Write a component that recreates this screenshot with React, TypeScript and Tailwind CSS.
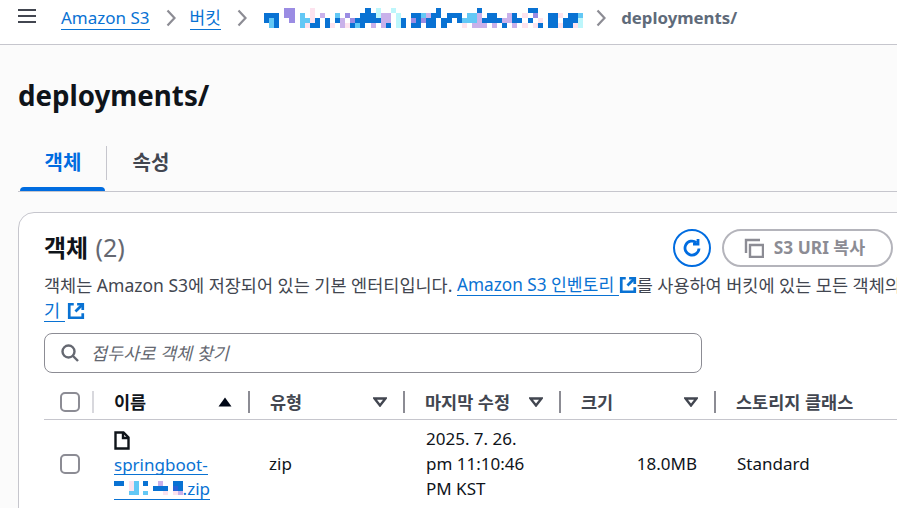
import React from "react";

const FONT = "font-['Noto_Sans','Noto_Sans_CJK_KR',sans-serif]";

const COLORS: Record<string, string> = {
  B: "#0972d3",
  D: "#2a63d8",
  P: "#9b8ce3",
  V: "#c9b1ea",
  L: "#63c8f5",
  K: "#fde3ee",
  C: "#bdf6fb",
};

// redacted bucket name, drawn as the mosaic it is in the picture
const BUCKET_ROWS = [
  "....PP...K..........B.C..C........B.......B.........BB........",
  "BBB.PP.L.K.V..L.P..BBBCVV.C..BBLVBB.BBB.LLV.BB..VB.K.P..BBK.BBL",
  "BLB..P.LLKB.B.BV.PBBBBBVV.CB.PBPBB.BB.BLLLVBBBBVVBB.B.K.BB.BBBC",
  ".LB....LKBB.BK.VKBLB.V.VB.CB.BB.BB.B...K.VVV.V.B.V.K.KB.BBKBBKC",
];

const FILE_ROWS = [
  "BB.KL.B..V..BB",
  "...KL...BBB.DB",
  "...LL.L...K.KV",
];

function Mosaic({ rows, cell, className }: { rows: string[]; cell: number; className?: string }) {
  const w = rows[1].length * cell;
  const h = rows.length * cell;
  return (
    <svg width={w} height={h} viewBox={`0 0 ${w} ${h}`} className={className} shapeRendering="crispEdges">
      {rows.map((row, y) =>
        row.split("").map((c, x) =>
          COLORS[c] ? (
            <rect key={`${x}-${y}`} x={x * cell} y={y * cell} width={cell} height={cell} fill={COLORS[c]} />
          ) : null
        )
      )}
    </svg>
  );
}

function ExternalIcon({ className }: { className?: string }) {
  return (
    <svg width="18" height="18" viewBox="0 0 16 16" fill="none" stroke="#0972d3" strokeWidth="2.4" className={className}>
      <path d="M6 2H2v12h12v-4" />
      <path d="M9 2h5v5" />
      <path d="M14 2 7.5 8.5" />
    </svg>
  );
}

function SortIcon({ active }: { active?: boolean }) {
  return active ? (
    <svg width="14" height="10" viewBox="0 0 14 10">
      <path d="M7 0.5 13.5 9.5H0.5Z" fill="#000716" />
    </svg>
  ) : (
    <svg width="14" height="10" viewBox="0 0 14 10" fill="none" stroke="#424650" strokeWidth="2.4">
      <path d="M1.5 1.5h11L7 8.5Z" />
    </svg>
  );
}

const columns = [
  { label: "이름", sort: true, active: true, width: "w-[156px]" },
  { label: "유형", sort: true, width: "w-[155px]" },
  { label: "마지막 수정", sort: true, width: "w-[156px]" },
  { label: "크기", sort: true, width: "w-[155px]" },
  { label: "스토리지 클래스", sort: false, width: "w-[200px]" },
];

function Crumb({ label }: { label: string }) {
  return (
    <a className="text-[#0972d3] border-b-[1.5px] border-[#0972d3] leading-[22px] whitespace-nowrap">{label}</a>
  );
}

function Sep({ className }: { className: string }) {
  return (
    <svg width="10" height="18" viewBox="0 0 10 18" fill="none" stroke="#8c8c94" strokeWidth="2.2" className={`shrink-0 ${className}`}>
      <path d="M1.5 1.5 8.5 9 1.5 16.5" />
    </svg>
  );
}

function Checkbox() {
  return <div className="w-5 h-5 rounded-[5px] border-2 border-[#8c8c94] bg-white" />;
}

export default function App() {
  return (
    <div className={`w-[897px] h-[508px] overflow-hidden bg-[#fbfbfb] text-[#0f141a] ${FONT}`}>
      {/* Breadcrumb bar */}
      <div className="h-[45px] bg-white border-b border-[#c6c6cd] flex items-center pl-[18px] pb-[8px] text-[17px]">
        <svg width="18" height="14" viewBox="0 0 18 14" fill="none" stroke="#424650" strokeWidth="2" className="mr-[25px] -mt-[4px]">
          <path d="M0 1h18M0 7h18M0 13h18" />
        </svg>
        <Crumb label="Amazon S3" />
        <Sep className="ml-[16px] mr-[14px]" />
        <Crumb label="버킷" />
        <Sep className="ml-[16px] mr-[17px]" />
        <Mosaic rows={BUCKET_ROWS} cell={5.07} />
        <Sep className="ml-[13px] mr-[15px]" />
        <span className="font-bold text-[16.8px] text-[#5f6b7a]">deployments/</span>
      </div>

      <div className="pl-[18px] pt-[30px]">
        <h1 className="text-[27.7px] font-bold leading-[40px]">deployments/</h1>

        {/* Tabs */}
        <div className="mt-[31px] h-[46px] border-b border-[#c6c6cd] flex items-start">
          <div className="relative w-[87px] h-[34px] flex items-center justify-center text-[20px] font-bold text-[#006ce0] border-r border-[#c6c6cd] ml-[2px]">
            객체
            <div className="absolute left-0 right-[1px] top-[41px] h-1 bg-[#006ce0] rounded-t-sm" />
          </div>
          <div className="w-[88px] h-[34px] flex items-center justify-center text-[20px] font-bold text-[#424650]">속성</div>
        </div>

        {/* Objects card */}
        <div className="mt-[20px] w-[1000px] h-[400px] bg-white border border-[#c6c6cd] rounded-2xl pt-[16px] pl-[25px]">
          <div className="w-[849px] flex items-center justify-between h-[38px]">
            <h2 className="text-[24px] font-bold leading-[30px] -mt-[2px]">
              객체 <span className="font-normal text-[25px] ml-[1px] text-[#656871]">(2)</span>
            </h2>
            <div className="flex items-center gap-[11px]">
              <button className="w-[38px] h-[38px] rounded-full border-2 border-[#006ce0] flex items-center justify-center">
                <svg width="20" height="20" viewBox="0 0 20 20" fill="none" stroke="#006ce0" strokeWidth="2.8">
                  <path d="M17 10.5a7 7 0 1 1-2.6-5.9" />
                  <path d="M16 1v5h-5" />
                </svg>
              </button>
              <button className="w-[171px] h-[38px] rounded-full border-2 border-[#b4b4bb] flex items-center justify-center gap-[10px] pr-[6px] text-[17.3px] font-bold text-[#8c8c94]">
                <svg width="20" height="20" viewBox="0 0 20 20" fill="none" stroke="#8c8c94" strokeWidth="2.4">
                  <path d="M6 7h13v12H6z" />
                  <path d="M2 15V2h14" />
                </svg>
                S3 URI 복사
              </button>
            </div>
          </div>

          <div className="text-[17.5px] mt-[5px] text-[#424650] whitespace-nowrap">
            <div className="flex items-center h-[26px]">
              객체는 Amazon S3에 저장되어 있는 기본 엔터티입니다.&nbsp;
              <a className="text-[#0972d3] text-[17.2px] border-b-[1.5px] border-[#0972d3] leading-[21px]">Amazon S3 인벤토리&nbsp;</a>
              <ExternalIcon />
              를 사용하여 버킷에 있는 모든 객체의
            </div>
            <div className="flex items-center h-[26px]">
              <a className="text-[#0972d3] border-b-[1.5px] border-[#0972d3] leading-[21px]">기&nbsp;</a>
              <ExternalIcon className="ml-[2px]" />
            </div>
          </div>

          <div className="mt-[9px] w-[658px] h-[40px] rounded-lg border border-[#8c8c94] flex items-center pl-[16px] gap-[12px]">
            <svg width="18" height="18" viewBox="0 0 18 18" fill="none" stroke="#656871" strokeWidth="2.4">
              <circle cx="7.5" cy="7.5" r="6" />
              <path d="m12 12 5 5" />
            </svg>
            <span className="italic text-[17.5px] text-[#656871]">접두사로 객체 찾기</span>
          </div>

          {/* Table */}
          <div className="w-[960px] mt-[7px]">
            <div className="h-[40px] pt-[5px] flex items-center border-b border-[#c6c6cd]">
              <div className="w-[50px] h-[22px] flex items-center pl-[16px] border-r-2 border-[#d8d8dd]">
                <Checkbox />
              </div>
              {columns.map((col, i) => (
                <div
                  key={col.label}
                  className={`${col.width} h-[22px] flex items-center justify-between pl-[20px] pr-[16px] text-[17.5px] font-bold ${
                    i < 4 ? "border-r-2 border-[#8c8c94]" : ""
                  } ${col.active ? "text-[#0f141a]" : "text-[#424650]"}`}
                >
                  <span className="whitespace-nowrap">{col.label}</span>
                  {col.sort && <SortIcon active={col.active} />}
                </div>
              ))}
            </div>

            <div className="flex items-center text-[17px] leading-[25px] pt-[6px]">
              <div className="w-[50px] pl-[16px]">
                <Checkbox />
              </div>
              <div className="w-[156px] pl-[20px]">
                <div className="h-[25px] pt-[3px]">
                  <svg width="16" height="19" viewBox="0 0 16 19" fill="none" stroke="#0f141a" strokeWidth="2.4">
                    <path d="M1.5 1.5h8l5 5v11h-13z" />
                    <path d="M9 1.5v5.5h5.5" />
                  </svg>
                </div>
                <a className="h-[22px] w-fit mb-[3px] text-[#0972d3] border-b-[1.5px] border-[#0972d3] block leading-[23px]">springboot-</a>
                <a className="h-[22px] w-fit text-[#0972d3] border-b-[1.5px] border-[#0972d3] flex items-center leading-[23px]">
                  <Mosaic rows={FILE_ROWS} cell={4.9} />
                  .zip
                </a>
              </div>
              <div className="w-[155px] pl-[19px]">zip</div>
              <div className="w-[156px] pl-[21px]">
                2025. 7. 26.
                <br />
                pm 11:10:46
                <br />
                PM KST
              </div>
              <div className="w-[155px] pr-[19px] text-right">18.0MB</div>
              <div className="pl-[21px]">Standard</div>
            </div>
          </div>
        </div>
      </div>
    </div>
  );
}
